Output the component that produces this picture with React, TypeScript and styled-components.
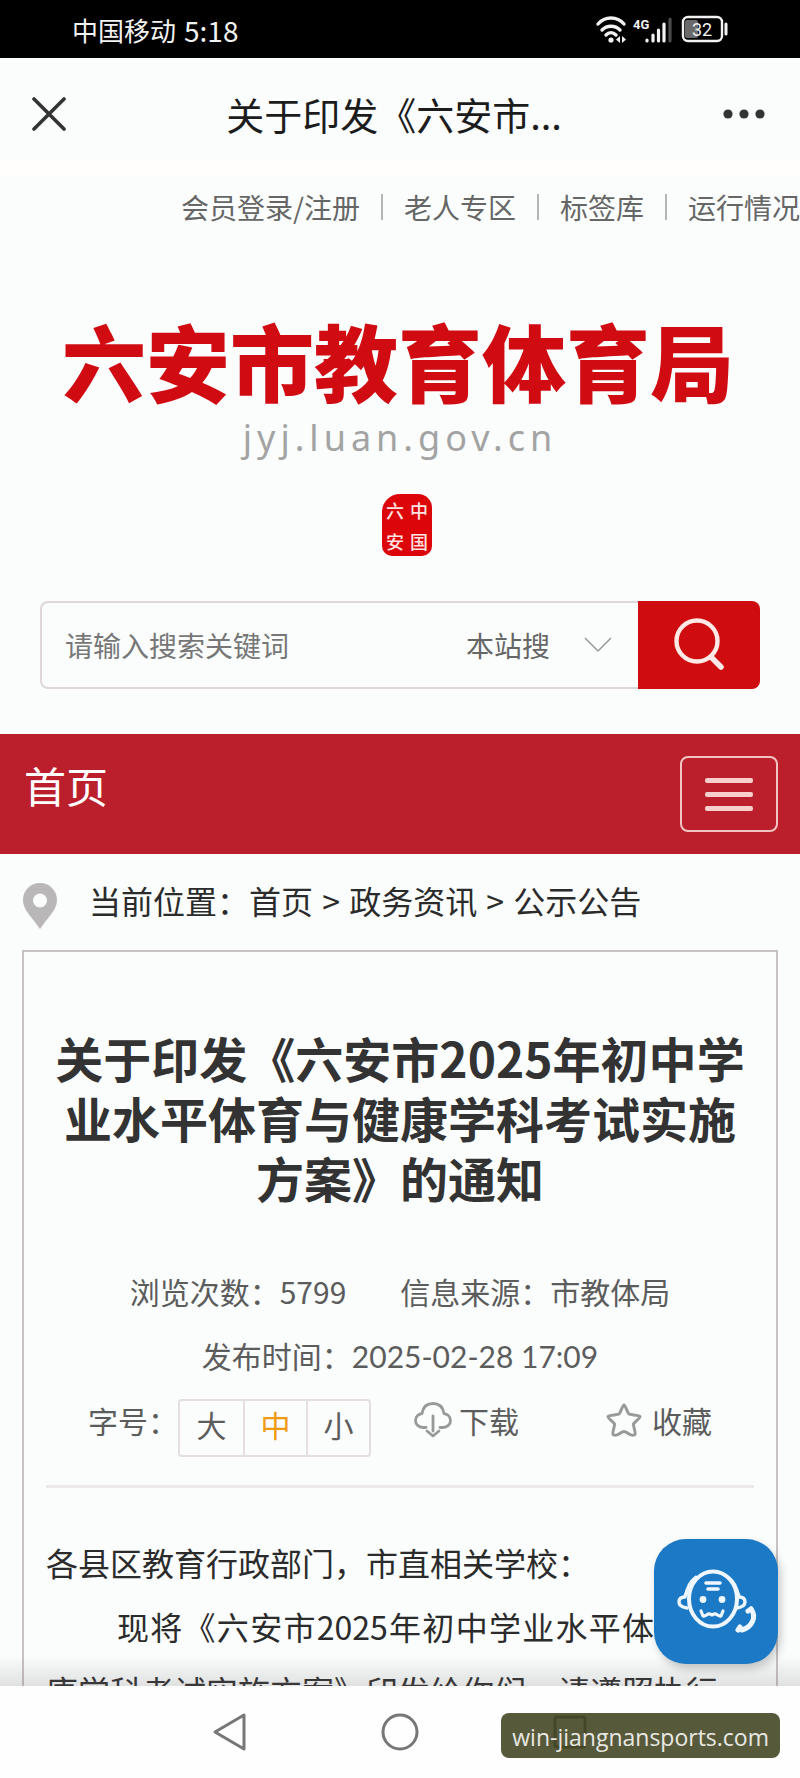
import React, { useState } from "react";
import styled, { createGlobalStyle } from "styled-components";

const GlobalStyle = createGlobalStyle`
  *, *::before, *::after { box-sizing: border-box; }
  body {
    margin: 0;
    background: #fafdfc;
    color: #2b2b2b;
    font-family: "Noto Sans CJK SC", "Noto Sans", sans-serif;
  }
  button, input, select { font: inherit; color: inherit; margin: 0; padding: 0; }
  button { background: none; border: 0; cursor: pointer; }
  a { color: inherit; text-decoration: none; }
  h1, p { margin: 0; }
  svg { display: block; flex: none; }
`;

const Screen = styled.div`
  display: flex;
  flex-direction: column;
  height: 100vh;
  overflow: hidden;
`;

const StatusBar = styled.div`
  display: flex;
  flex: none;
  align-items: center;
  justify-content: space-between;
  height: 58px;
  padding: 2px 72px 0;
  background: #000;
  color: #f2f2f2;
  font-size: 26px;
  line-height: 32px;
`;

const Carrier = styled.div`
  display: flex;
  align-items: center;
  gap: 8px;
`;

const Clock = styled.span`
  font-size: 28px;
`;

const TitleBar = styled.header`
  display: flex;
  flex: none;
  align-items: center;
  justify-content: space-between;
  height: 118px;
  padding: 10px 34px 0 32px;
  border-bottom: 16px solid #fffefd;
`;

const PageName = styled.div`
  color: #1c1c1c;
  font-size: 38px;
  line-height: 48px;
`;

const Viewport = styled.main`
  position: relative;
  flex: 1;
  min-height: 0;
  overflow: hidden;
`;

const TopLinks = styled.nav`
  display: flex;
  align-items: center;
  justify-content: flex-end;
  gap: 21px;
  height: 62px;
  color: #666;
  font-size: 28px;
  line-height: 40px;
  white-space: nowrap;
`;

const Separator = styled.span`
  width: 2px;
  height: 26px;
  background: #b5b5b5;
`;

const Brand = styled.div`
  display: flex;
  flex-direction: column;
  align-items: center;
  padding-top: 72px;
`;

const BrandName = styled.div`
  padding-right: 4px;
  color: #d10b12;
  font-size: 84px;
  font-weight: 900;
  line-height: 100px;
  white-space: nowrap;
`;

const BrandUrl = styled.div`
  margin-top: 4px;
  color: #a3a3a3;
  font-family: "Noto Sans", sans-serif;
  font-size: 36px;
  letter-spacing: 5px;
  line-height: 48px;
`;

const Seal = styled.div`
  margin: 32px 0 0 14px;
  width: 50px;
  height: 62px;
  padding: 8px 1px 0;
  border-radius: 18px 14px 10px 10px;
  background: #dc0509;
  color: #ffe3e0;
  font-size: 18px;
  font-weight: 500;
  line-height: 24px;
  letter-spacing: 13px;
  writing-mode: vertical-rl;
  white-space: nowrap;
  overflow: hidden;
`;

const SearchForm = styled.form`
  display: flex;
  height: 88px;
  margin: 45px 40px;
`;

const SearchField = styled.div`
  display: flex;
  flex: 1;
  align-items: center;
  min-width: 0;
  padding: 0 26px 0 23px;
  border: 2px solid #ddd7d8;
  border-right: 0;
  border-radius: 8px 0 0 8px;
  color: #666;
  font-size: 28px;
`;

const Keyword = styled.input`
  flex: 1;
  min-width: 0;
  height: 80px;
  border: 0;
  outline: 0;
  background: transparent;
  &::placeholder { color: #777; opacity: 1; }
`;

const Scope = styled.select`
  width: 118px;
  height: 80px;
  border: 0;
  outline: 0;
  background: transparent;
  appearance: none;
`;

const SearchButton = styled.button`
  display: flex;
  align-items: center;
  justify-content: center;
  width: 122px;
  border-radius: 0 8px 8px 0;
  background: #cf0d10;
`;

const MainNav = styled.nav`
  display: flex;
  align-items: center;
  justify-content: space-between;
  height: 120px;
  padding: 0 22px 0 24px;
  background: #bb1f2c;
  color: #fff;
`;

const NavHome = styled.a`
  padding-bottom: 18px;
  font-size: 42px;
  line-height: 56px;
`;

const MenuButton = styled.button`
  display: flex;
  flex-direction: column;
  align-items: center;
  justify-content: center;
  gap: 9px;
  width: 98px;
  height: 76px;
  border: 2px solid #f3c3c2;
  border-radius: 8px;
`;

const MenuLine = styled.span`
  width: 48px;
  height: 5px;
  border-radius: 2px;
  background: #f7cfcc;
`;

const Breadcrumb = styled.nav`
  display: flex;
  align-items: center;
  gap: 32px;
  height: 96px;
  padding: 0 0 4px 23px;
  font-size: 32px;
  line-height: 48px;
  white-space: pre;
`;

const Arrow = styled.span`
  margin: 0 2px;
`;

const PinIcon = styled.svg`
  margin-top: 12px;
`;

const Article = styled.article`
  margin: 0 22px;
  padding: 75px 22px 0;
  border: 2px solid #c6c1c3;
`;

const Title = styled.h1`
  color: #333;
  font-size: 48px;
  font-weight: 700;
  line-height: 60px;
  text-align: center;
`;

const Meta = styled.div`
  margin-top: 52px;
  padding-bottom: 28px;
  border-bottom: 3px solid #ece9e9;
  color: #5c5c5c;
  font-size: 30px;
  line-height: 64px;
`;

const MetaRow = styled.div`
  display: flex;
  justify-content: center;
  gap: 54px;
`;

const Timestamp = styled.time`
  font-family: Lato, sans-serif;
`;

const Tools = styled.div`
  display: flex;
  align-items: flex-start;
  padding: 0 42px;
`;

const SizeGroup = styled.div`
  display: flex;
  margin: 11px 43px 0 0;
  border: 2px solid #e6dfe0;
  border-radius: 4px;
`;

const SizeButton = styled.button<{ $active: boolean }>`
  width: 63px;
  height: 54px;
  padding-bottom: 8px;
  line-height: 46px;
  color: ${(p) => (p.$active ? "#f09a10" : "#5c5c5c")};
  & + & { border-left: 2px solid #e6dfe0; }
`;

const ToolButton = styled.button<{ $gap: number }>`
  display: flex;
  align-items: center;
  gap: ${(p) => p.$gap}px;
  line-height: 64px;
  &:last-child { margin-left: auto; }
`;

const Body = styled.div`
  padding-top: 42px;
  font-size: 32px;
  line-height: 64px;
  text-align: justify;
`;

const Indented = styled.p`
  text-indent: 71px;
`;

const Fade = styled.div`
  position: absolute;
  right: 0;
  bottom: 0;
  left: 0;
  height: 30px;
  background: linear-gradient(rgba(120, 110, 115, 0), rgba(120, 110, 115, 0.2));
  pointer-events: none;
`;

const Assistant = styled.button`
  position: absolute;
  right: 22px;
  bottom: 22px;
  width: 124px;
  height: 125px;
  border-radius: 32px;
  background: #1c79c5;
  box-shadow: 3px 5px 8px rgba(0, 0, 0, 0.2);
`;

const SystemNav = styled.footer`
  position: relative;
  display: flex;
  flex: none;
  align-items: center;
  justify-content: center;
  gap: 133px;
  height: 92px;
  background: #fefefe;
`;

const Watermark = styled.div`
  position: absolute;
  right: 20px;
  bottom: 20px;
  padding: 3px 11px 0;
  border-radius: 8px;
  background: rgba(66, 69, 35, 0.89);
  color: #e8e8e3;
  font-family: "Open Sans", "Noto Sans", sans-serif;
  font-size: 23px;
  line-height: 42px;
`;

const topLinks = ["会员登录/注册", "老人专区", "标签库", "运行情况"];
const sizes = ["大", "中", "小"];

function StatusIcons() {
  return (
    <svg width="134" height="30" viewBox="0 0 134 30" fill="none" stroke="#f2f2f2" aria-hidden="true">
      <g strokeWidth="3.4" strokeLinecap="round">
        <path d="M4 9C11 1 23 1 30 9" />
        <path d="M8 15C13 10 21 10 26 15" />
        <path d="M12 20C15 17 19 17 22 20" />
      </g>
      <circle cx="17" cy="25" r="2.6" fill="#f2f2f2" stroke="none" />
      <path d="M26 21v7l-4-3.500zM28 21v7l4-3.500z" fill="#f2f2f2" stroke="none" />
      <text x="39" y="14" fill="#f2f2f2" stroke="none" fontFamily="Roboto, sans-serif" fontSize="13" fontWeight="700">4G</text>
      <g strokeWidth="3.2" strokeLinecap="round">
        <path d="M53 26v-1M59 26v-6M64.500 26v-11M70 26V9" />
        <path d="M76 26V4" stroke="#4a4a4a" />
      </g>
      <rect x="91" y="5" width="13" height="18" rx="2" fill="#6a6a6a" stroke="none" />
      <rect x="89" y="2" width="39" height="24" rx="5" strokeWidth="2.400" />
      <path d="M132 9v10" strokeWidth="3" strokeLinecap="round" />
      <text x="108" y="21" fill="#f2f2f2" stroke="none" textAnchor="middle" fontFamily="Roboto, sans-serif" fontSize="18">32</text>
    </svg>
  );
}

export default function App() {
  const [size, setSize] = useState("中");
  return (
    <Screen>
      <GlobalStyle />
      <StatusBar>
        <Carrier>
          <span>中国移动</span>
          <Clock>5:18</Clock>
        </Carrier>
        <StatusIcons />
      </StatusBar>
      <TitleBar>
        <button aria-label="关闭">
          <svg width="34" height="34" viewBox="0 0 34 34" stroke="#333" strokeWidth="3.600" strokeLinecap="round">
            <path d="M2 2l30 30M32 2L2 32" />
          </svg>
        </button>
        <PageName>关于印发《六安市...</PageName>
        <button aria-label="更多">
          <svg width="44" height="12" viewBox="0 0 44 12" fill="#333">
            <circle cx="6" cy="6" r="4.600" />
            <circle cx="22" cy="6" r="4.600" />
            <circle cx="38" cy="6" r="4.600" />
          </svg>
        </button>
      </TitleBar>

      <Viewport>
        <TopLinks>
          {topLinks.map((label, i) => (
            <React.Fragment key={label}>
              {i > 0 && <Separator />}
              <a href="#">{label}</a>
            </React.Fragment>
          ))}
        </TopLinks>

        <Brand>
          <BrandName>六安市教育体育局</BrandName>
          <BrandUrl>jyj.luan.gov.cn</BrandUrl>
          <Seal>中国<br />六安</Seal>
        </Brand>

        <SearchForm onSubmit={(e) => e.preventDefault()}>
          <SearchField>
            <Keyword type="text" aria-label="搜索关键词" placeholder="请输入搜索关键词" />
            <Scope aria-label="搜索范围">
              <option>本站搜</option>
            </Scope>
            <svg width="28" height="16" viewBox="0 0 28 16" fill="none" stroke="#999" strokeWidth="1.500" aria-hidden="true">
              <path d="M1 1l13 13L27 1" />
            </svg>
          </SearchField>
          <SearchButton aria-label="搜索">
            <svg width="52" height="54" viewBox="0 0 52 54" fill="none" stroke="#fde9e6" strokeLinecap="round">
              <circle cx="24" cy="23" r="20.500" strokeWidth="4.400" />
              <path d="M38 39l10 10" strokeWidth="5.500" />
            </svg>
          </SearchButton>
        </SearchForm>

        <MainNav>
          <NavHome href="#">首页</NavHome>
          <MenuButton aria-label="菜单">
            <MenuLine />
            <MenuLine />
            <MenuLine />
          </MenuButton>
        </MainNav>

        <Breadcrumb>
          <PinIcon width="34" height="46" viewBox="0 0 34 46" aria-hidden="true">
            <path
              fill="#b9b7b8"
              fillRule="evenodd"
              d="M17 0C7.500 0 0 7.500 0 17c0 10 9 17 17 29 8-12 17-19 17-29C34 7.500 26.500 0 17 0zm0 10.500a7 7 0 1 1 0 14 7 7 0 0 1 0-14z"
            />
          </PinIcon>
          <span>
            当前位置：<a href="#">首页</a>
            <Arrow> &gt; </Arrow>
            <a href="#">政务资讯</a>
            <Arrow> &gt; </Arrow>
            <a href="#">公示公告</a>
          </span>
        </Breadcrumb>

        <Article>
          <Title>关于印发《六安市2025年初中学业水平体育与健康学科考试实施方案》的通知</Title>
          <Meta>
            <MetaRow>
              <span>浏览次数：5799</span>
              <span>信息来源：市教体局</span>
            </MetaRow>
            <MetaRow>
              <span>发布时间：<Timestamp>2025-02-28 17:09</Timestamp></span>
            </MetaRow>
            <Tools>
              <span>字号：</span>
              <SizeGroup>
                {sizes.map((s) => (
                  <SizeButton key={s} $active={s === size} onClick={() => setSize(s)}>
                    {s}
                  </SizeButton>
                ))}
              </SizeGroup>
              <ToolButton $gap={7}>
                <svg width="38" height="36" viewBox="0 0 38 36" fill="none" stroke="#999" strokeWidth="2.800" strokeLinecap="round" strokeLinejoin="round" aria-hidden="true">
                  <path d="M12 25.500H9C4.500 25.500 1.500 22 1.500 18.500c0-4 3-6.500 6.500-7C9 5 13 1.500 19 1.500S29 5 30 11.500c3.500.5 6.500 3 6.500 7 0 3.500-3 7-7.500 7h-3" />
                  <path d="M19 14v15M13 29l6 5 6-5" />
                </svg>
                下载
              </ToolButton>
              <ToolButton $gap={10}>
                <svg width="36" height="34" viewBox="0 0 36 34" fill="none" stroke="#999" strokeWidth="3" strokeLinejoin="round" aria-hidden="true">
                  <path d="M18 2c1.500 0 3.500 8 5 9s10.500 1 11 2.500-6 6-6.500 7.500 2.500 9 1.500 10.500-3.500.5-5 0-4-3-6-3-4.500 2.500-6 3-4 1.500-5 0 2-9 1.500-10.500S1.500 15 2 13.500 11.500 12 13 11s3.500-9 5-9z" />
                </svg>
                收藏
              </ToolButton>
            </Tools>
          </Meta>
          <Body>
            <p>各县区教育行政部门，市直相关学校：</p>
            <Indented>现将《六安市2025年初中学业水平体育与健康学科考试实施方案》印发给你们，请遵照执行。</Indented>
          </Body>
        </Article>

        <Fade />
        <Assistant aria-label="智能客服">
          <svg width="124" height="125" viewBox="0 0 124 125" fill="none" stroke="#eef7ff" strokeLinecap="round" strokeLinejoin="round">
            <ellipse cx="59" cy="60" rx="24" ry="27.500" strokeWidth="4" />
            <path d="M33 52c-1 3-2 4-2 6-4 0-6 2-6 5s2 5 8 6M83 52c1 3 2 4 2 6 4 0 6 2 6 5s-2 5-8 6" strokeWidth="3.400" />
            <path d="M42 38c-5 4-9 9-10 18M74 38c5 4 9 9 10 18" strokeWidth="3" />
            <path d="M52 44h14M54 50h10" strokeWidth="3.600" />
            <circle cx="49" cy="60.500" r="3.400" fill="#eef7ff" stroke="none" />
            <circle cx="68" cy="60.500" r="3.400" fill="#eef7ff" stroke="none" />
            <path d="M47 72l2 5c3 1 4-3 7-2l2 1 2-1c3-1 4 3 7 2l2-5" strokeWidth="3.200" />
            <path d="M97 70c6 8 1 18-9 21" strokeWidth="5" />
            <path d="M97 70l-3 2M86 88l-2 3" strokeWidth="5" />
          </svg>
        </Assistant>
      </Viewport>

      <SystemNav>
        <button aria-label="返回">
          <svg width="36" height="40" viewBox="0 0 36 40" fill="none" stroke="#777" strokeWidth="3" strokeLinejoin="round">
            <path d="M32 3v34L3 20z" />
          </svg>
        </button>
        <button aria-label="主屏幕">
          <svg width="38" height="38" viewBox="0 0 38 38" fill="none" stroke="#777" strokeWidth="3">
            <circle cx="19" cy="19" r="17" />
          </svg>
        </button>
        <button aria-label="最近任务">
          <svg width="36" height="36" viewBox="0 0 36 36" fill="none" stroke="#555" strokeWidth="3">
            <rect x="3" y="3" width="30" height="30" rx="2" />
          </svg>
        </button>
        <Watermark>win-jiangnansports.com</Watermark>
      </SystemNav>
    </Screen>
  );
}
